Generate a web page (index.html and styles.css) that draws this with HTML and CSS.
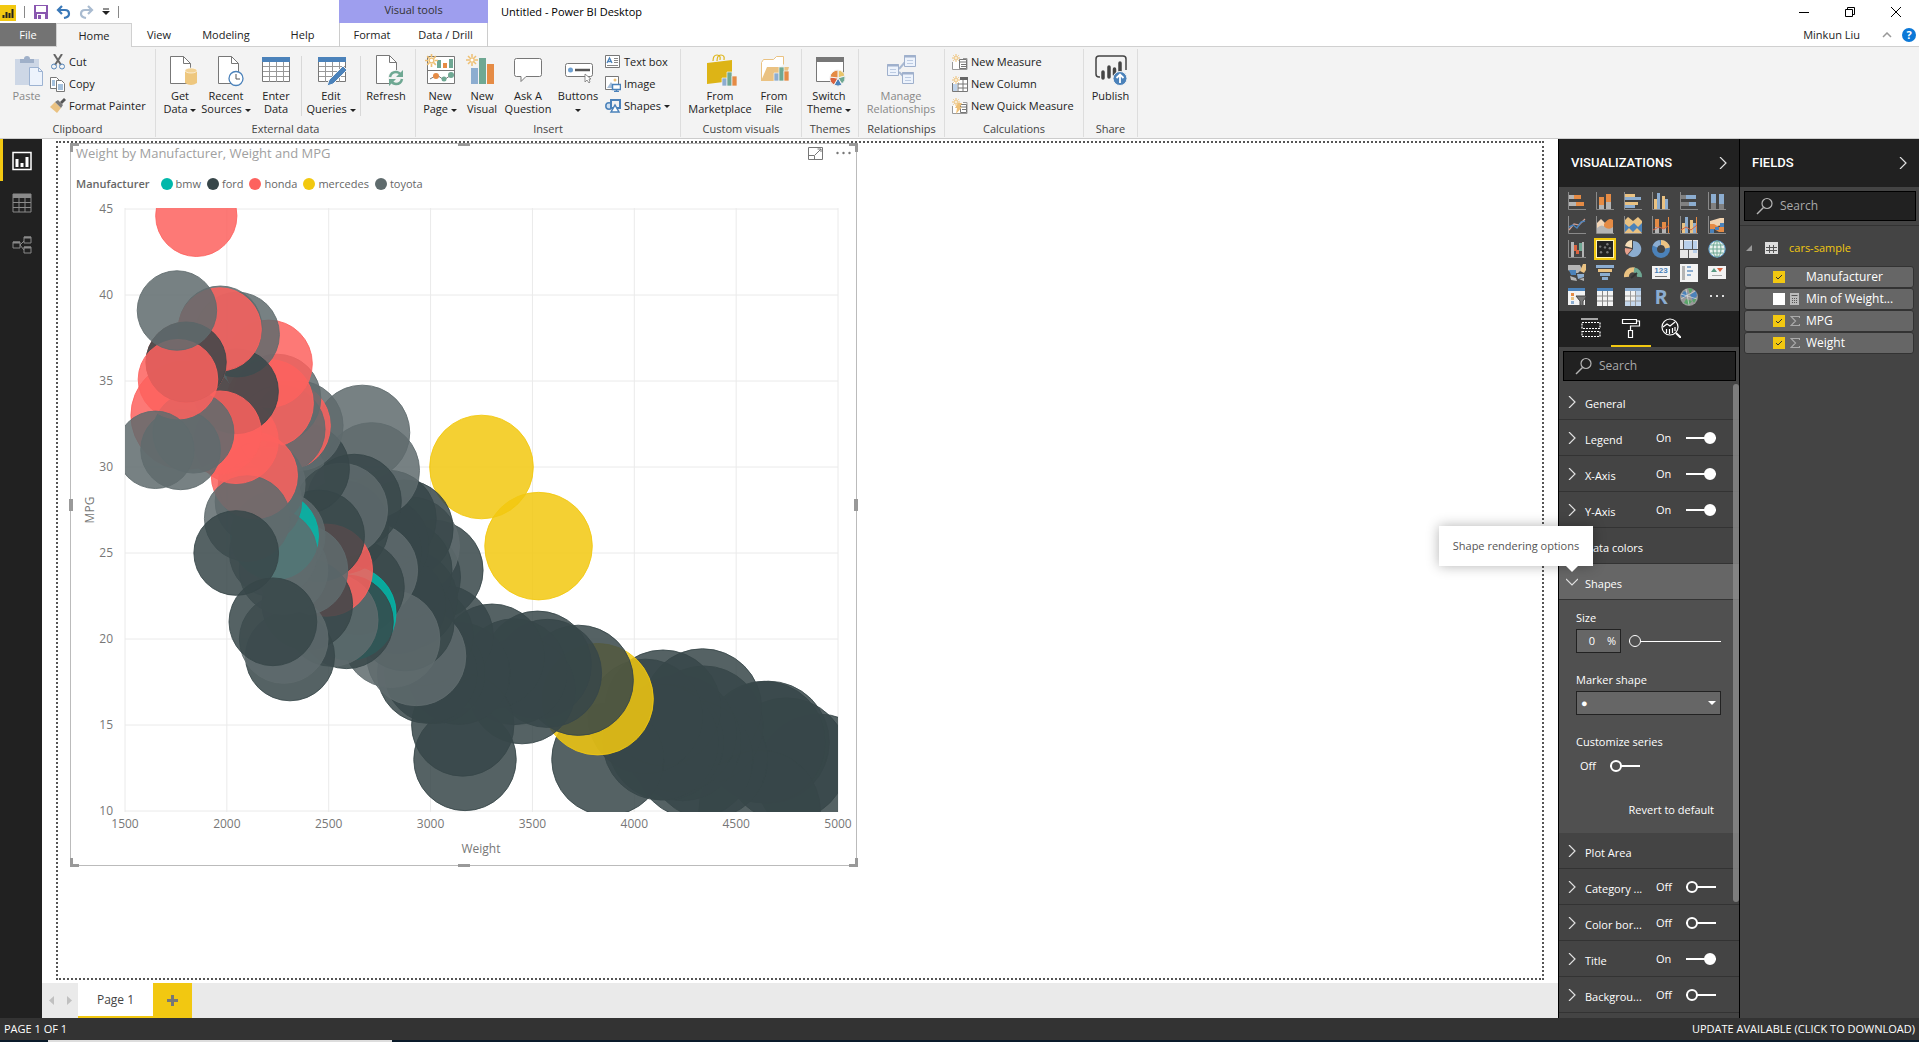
FILE: index.html
```html
<!DOCTYPE html>
<html lang="en">
<head>
<meta charset="utf-8">
<title>Untitled - Power BI Desktop</title>
<link rel="stylesheet" href="styles.css">
</head>
<body>
<svg class="defs" aria-hidden="true">
  <symbol id="sun" viewBox="0 0 12 12"><path d="M6 0v3M6 9v3M0 6h3M9 6h3M2 2l2 2M8 8l2 2M10 2L8 4M4 8l-2 2" stroke="#eec074" stroke-width="1.5"/><circle cx="6" cy="6" r="2.2" fill="#fff" stroke="#eec074" stroke-width="1.3"/></symbol>
  <symbol id="chev" viewBox="0 0 12 12"><path d="M3 0l6 6-6 6" fill="none" stroke="#e0e0e0" stroke-width="1.2"/></symbol>
  <symbol id="search" viewBox="0 0 18 18"><circle cx="11" cy="6.500" r="5" fill="none" stroke="#b5b5b5" stroke-width="1.2"/><path d="M7.500 10.500L1 17" stroke="#b5b5b5" stroke-width="1.4"/></symbol>
  <symbol id="sigma" viewBox="0 0 10 12"><path d="M9.500 3V1.500H1L5.500 6 1 10.500h8.500V9" fill="none" stroke="#aaa" stroke-width="1.2"/></symbol>
</svg>

<header class="titlebar">
  <div class="quick">
    <svg width="16" height="20" viewBox="0 0 16 20"><path fill="#f2c811" d="M0 3h16v16H0z"/><path stroke="#222" stroke-width="2" d="M3.500 16v-3M6.500 16v-6M9.500 16v-5M12.500 16V7"/></svg>
    <i class="bar"></i>
    <button class="qa" aria-label="Save"><svg width="14" height="14" viewBox="0 0 14 14"><path d="M0 0h14v14H0z" fill="#8a57b0"/><path fill="#fff" d="M2 1h10v6H2zM3 9h8v5H3z"/><path fill="#8a57b0" d="M4 10h3v4H4z"/></svg></button>
    <button class="qa" aria-label="Undo"><svg width="15" height="14" viewBox="0 0 15 14"><path d="M6 1L2 5l4 4M2 5h7q4 0 4 4 0 3-5 4" fill="none" stroke="#3a78b8" stroke-width="2.200"/></svg></button>
    <button class="qa" aria-label="Redo"><svg width="15" height="14" viewBox="0 0 15 14"><path d="M9 1l4 4-4 4M13 5H6Q2 5 2 9q0 3 5 4" fill="none" stroke="#a9bbd0" stroke-width="2.200"/></svg></button>
    <button class="qa" aria-label="Customize toolbar"><svg width="8" height="8" viewBox="0 0 8 8"><path d="M1 1h6" stroke="#222"/><path d="M0 3h8L4 7z" fill="#222"/></svg></button>
    <i class="bar"></i>
  </div>
  <div class="context-title">Visual tools</div>
  <h1 class="window-title">Untitled - Power BI Desktop</h1>
  <div class="window-buttons">
    <button aria-label="Minimize"><svg width="12" height="12"><path d="M1 6.500h10" stroke="#000"/></svg></button>
    <button aria-label="Restore"><svg width="12" height="12" fill="none" stroke="#000"><path d="M1.500 3.500h7v7h-7zM3.500 3V1.500h7v7H9"/></svg></button>
    <button aria-label="Close"><svg width="12" height="12" stroke="#000"><path d="M1 1l10 10M11 1L1 11"/></svg></button>
  </div>
</header>

<nav class="tabs">
  <button class="tab file">File</button>
  <button class="tab active">Home</button>
  <button class="tab">View</button>
  <button class="tab">Modeling</button>
  <button class="tab">Help</button>
  <div class="context-tabs"><button class="tab">Format</button><button class="tab">Data / Drill</button></div>
  <div class="account"><span>Minkun Liu</span>
    <svg width="10" height="6" fill="none" stroke="#999" stroke-width="1.500"><path d="M1 5l4-4 4 4"/></svg>
    <button class="help" aria-label="Help">?</button></div>
</nav>

<section class="ribbon" aria-label="Ribbon">
  <div class="group">
    <div class="tools">
      <button class="big w-paste off"><svg width="34" height="32" viewBox="0 0 34 32"><path fill="#cdd7e6" d="M5 5h24v26H5z"/><path fill="#9fb0c9" d="M10 5h4q0-3 3-3t3 3h4v4H10z"/><path d="M19.500 13.500h9l4 4v14h-13z" fill="#edf3fc" stroke="#9db3d2"/><path d="M28.500 13.500v4h4" fill="none" stroke="#9db3d2"/></svg><span>Paste</span></button>
      <div class="stack">
        <button class="row"><svg width="16" height="16" viewBox="0 0 16 16"><path d="M4 0l7 11M12 0L5 11" stroke="#666" stroke-width="2"/><circle cx="4" cy="12.500" r="2.500" fill="none" stroke="#5687bb"/><circle cx="12" cy="12.500" r="2.500" fill="none" stroke="#5687bb"/></svg>Cut</button>
        <button class="row"><svg width="16" height="16" viewBox="0 0 16 16" fill="#fff" stroke="#777"><path d="M.5 1.500h6l3 3v8h-9z"/><path d="M6.500 4.500h5l3 3v8h-8z"/><path stroke="#4b82ba" d="M2 5h3M2 7h3M2 9h3M8 9h5M8 11h5M8 13h5"/></svg>Copy</button>
        <button class="row"><svg width="16" height="16" viewBox="0 0 16 16"><path d="M0 9l5-5 6 6-4 5z" fill="#eac282"/><path d="M5 4l3-2 5 5-2 3z" fill="#7a7a7a"/><path d="M10 4l4-4 2 2-4 4z" fill="#555"/></svg>Format Painter</button>
      </div>
    </div>
    <div class="group-name">Clipboard</div>
  </div>
  <div class="group">
    <div class="tools">
      <button class="big w42"><svg width="34" height="32" viewBox="0 0 34 32"><path d="M7.500 2.500h13l7 7v20h-20z" fill="#fff" stroke="#777"/><path d="M20.500 2.500v7h7" fill="none" stroke="#777"/><path d="M22 17v12q6 4 12 0V17z" fill="#eec77e"/><ellipse cx="28" cy="16.500" rx="6" ry="2.500" fill="#f2d294" stroke="#fff" stroke-width=".6"/></svg><span>Get<br>Data <i class="dd"></i></span></button>
      <button class="big w50"><svg width="34" height="32" viewBox="0 0 34 32"><path d="M9.500 2.500h13l7 7v20h-20z" fill="#fff" stroke="#777"/><path d="M22.500 2.500v7h7" fill="none" stroke="#777"/><circle cx="27" cy="24.500" r="7" fill="#fff" stroke="#4b82ba" stroke-width="1.300"/><path d="M27 20v5h4" fill="none" stroke="#555"/></svg><span>Recent<br>Sources <i class="dd"></i></span></button>
      <button class="big w50"><svg width="34" height="32" viewBox="0 0 34 32"><path d="M3.500 3.500h27v24h-27z" fill="#fff" stroke="#777"/><path fill="#4b82ba" d="M3 3h28v5H3z"/><path d="M4 12.500h26M4 17.500h26M4 22.500h26M10.500 8v20M17.500 8v20M24.500 8v20" stroke="#999"/></svg><span>Enter<br>Data</span></button>
      <i class="sep"></i>
      <button class="big w58"><svg width="34" height="32" viewBox="0 0 34 32"><path d="M4.500 3.500h27v24h-27z" fill="#fff" stroke="#777"/><path fill="#4b82ba" d="M4 3h28v5H4z"/><path d="M5 12.500h26M5 17.500h26M5 22.500h26M11.500 8v20M18.500 8v20M25.500 8v20" stroke="#999"/><path d="M13 32l2-6 14-14 4 4-14 14z" fill="#4b82ba" stroke="#f3f3f3"/></svg><span>Edit<br>Queries <i class="dd"></i></span></button>
      <i class="sep"></i>
      <button class="big w50"><svg width="34" height="32" viewBox="0 0 34 32"><path d="M7.500 1.500h13l7 7v21h-20z" fill="#fff" stroke="#777"/><path d="M20.500 1.500v7h7" fill="none" stroke="#777"/><circle cx="27" cy="24" r="8" fill="#f3f3f3"/><path d="M21 23q1-5 6-5 3 0 5 3M33 25q-1 5-6 5-3 0-5-3" fill="none" stroke="#6fa893" stroke-width="2.500"/><path d="M34 16v7h-7zM20 32v-7h7z" fill="#6fa893"/></svg><span>Refresh</span></button>
    </div>
    <div class="group-name">External data</div>
  </div>
  <div class="group">
    <div class="tools">
      <button class="big w42"><svg width="34" height="32" viewBox="0 0 34 32"><path d="M4.500 2.500h27v27h-27zM4 16.500h28" fill="#fff" stroke="#777"/><path fill="#6fa893" d="M14 6h4v8h-4zM26 5h4v9h-4z"/><path fill="#e58b45" d="M20 9h4v5h-4z"/><path d="M7 25l7-4 7 5 7-5" stroke="#777" fill="none"/><circle cx="13" cy="22" r="3" fill="#e58b45"/><circle cx="21" cy="25" r="2.500" fill="#6fa893"/><circle cx="28" cy="21" r="3" fill="#6fa893"/><use href="#sun" x="2" y="0" width="13" height="13"/></svg><span>New<br>Page <i class="dd"></i></span></button>
      <button class="big w42"><svg width="34" height="32" viewBox="0 0 34 32"><path fill="#8cadd0" d="M6 14h7v16H6z"/><path fill="#6fa893" d="M14 4h7v26h-7z"/><path fill="#e58b45" d="M22 10h7v20h-7z"/><use href="#sun" x="1" y="0" width="12" height="12"/></svg><span>New<br>Visual</span></button>
      <button class="big w50"><svg width="34" height="32" viewBox="0 0 34 32"><path d="M5.500 4.500h23q2 0 2 2v14q0 2-2 2H15l-5 5v-5H5.500q-2 0-2-2v-14q0-2 2-2z" fill="#fff" stroke="#777"/></svg><span>Ask A<br>Question</span></button>
      <button class="big w50"><svg width="34" height="32" viewBox="0 0 34 32"><rect x="4.500" y="9.500" width="27" height="13" rx="2" fill="#fff" stroke="#777"/><circle cx="9.500" cy="16" r="2.500" fill="#6d9fd0"/><path d="M14 16h15" stroke="#555" stroke-width="2.500"/><path d="M24 20v8l2-2 2 3 1-1-1-3h2z" fill="#fff" stroke="#777" stroke-width=".8"/></svg><span>Buttons<br><i class="dd"></i></span></button>
      <div class="stack insert">
        <button class="row"><svg width="16" height="14" viewBox="0 0 16 14"><path d="M.5.500h14v12H.5z" fill="#fff" stroke="#777"/><path d="M2 8l2.500-5L7 8M3 6.500h3" stroke="#4b82ba" fill="none" stroke-width="1.300"/><path d="M9 3.500h4M9 5.500h4M9 7.500h4M2 10.500h11" stroke="#888"/></svg>Text box</button>
        <button class="row"><svg width="16" height="16" viewBox="0 0 16 16"><path d="M.5.500h13v13H.5z" fill="#fff" stroke="#777"/><path d="M2 12l4-6 4 6z" fill="#a9c0da"/><circle cx="10" cy="4" r="1.500" fill="#eec077"/><path d="M7.500 8.500h8v5h-8zM11.500 13v3M9 15.500h5" fill="#fff" stroke="#4b82ba" stroke-width="1.500"/></svg>Image</button>
        <button class="row"><svg width="16" height="14" viewBox="0 0 16 14"><circle cx="4" cy="7" r="3.200" fill="#cfdff0" stroke="#4b82ba" stroke-width="1.500"/><path d="M6 1h9v8H6z" fill="#f3f3f3" stroke="#4b82ba" stroke-width="2"/><path d="M6 13l4-7 4 7z" fill="#fff" stroke="#4b82ba" stroke-width="1.500"/></svg>Shapes <i class="dd"></i></button>
      </div>
    </div>
    <div class="group-name">Insert</div>
  </div>
  <div class="group">
    <div class="tools">
      <button class="big w72"><svg width="34" height="32" viewBox="0 0 34 32"><path d="M4 9l25-3v21L4 30z" fill="#ddb416"/><path d="M10 7q0-6 4-6t3 5M14 7q0-6 4-6t3 5" fill="none" stroke="#ddb416" stroke-width="1.200"/><path fill="#8cadd0" stroke="#f3f3f3" stroke-width=".7" d="M19 24h5v8h-5z"/><path fill="#6fa893" stroke="#f3f3f3" stroke-width=".7" d="M24 18h5v14h-5z"/><path fill="#e58b45" stroke="#f3f3f3" stroke-width=".7" d="M29 22h5v10h-5z"/></svg><span>From<br>Marketplace</span></button>
      <button class="big w36"><svg width="34" height="32" viewBox="0 0 34 32"><path d="M4.500 27V8.500l2-3h10l3-3h7v8" fill="#fff" stroke="#eac282"/><path d="M4 27l6-14h22l-4 14z" fill="#eac282"/><path fill="#8cadd0" stroke="#f3f3f3" stroke-width=".7" d="M17 19h5v8h-5z"/><path fill="#6fa893" stroke="#f3f3f3" stroke-width=".7" d="M22 13h5v14h-5z"/><path fill="#e58b45" stroke="#f3f3f3" stroke-width=".7" d="M27 17h5v10h-5z"/></svg><span>From<br>File</span></button>
    </div>
    <div class="group-name">Custom visuals</div>
  </div>
  <div class="group">
    <div class="tools">
      <button class="big w48"><svg width="34" height="32" viewBox="0 0 34 32"><path d="M4.500 3.500h27v24h-27z" fill="#fff" stroke="#777"/><path fill="#777" d="M4 3h28v5H4z"/><g stroke="#f3f3f3"><path fill="#e9c46a" d="M26 24V16a8 8 0 0 1 7 6z"/><path fill="#6fa893" d="M26 24l7-2a8 8 0 0 1-3 8z"/><path fill="#4b82ba" d="M26 24l4 7a8 8 0 0 1-8 0z"/><path fill="#d9623f" d="M26 24l-4 7a8 8 0 0 1-4-8z"/><path fill="#e58b45" d="M26 24l-8-1a8 8 0 0 1 8-7z"/></g></svg><span>Switch<br>Theme <i class="dd"></i></span></button>
    </div>
    <div class="group-name">Themes</div>
  </div>
  <div class="group">
    <div class="tools">
      <button class="big w78 off"><svg width="34" height="32" viewBox="0 0 34 32"><path d="M15 15l7-8M15 18l6 6" stroke="#a9b9d2" stroke-width="2"/><g fill="#edf3fc" stroke="#9fb0cc"><path d="M3.500 10.500h11v11h-11zM20.500 1.500h11v11h-11zM18.500 18.500h11v11h-11z"/></g><path d="M3 11.500h12M20 2.500h12M18 19.500h12" stroke="#9fb0cc" stroke-width="2"/><path d="M6 15.500h6M6 18.500h6M23 6.500h6M23 9.500h6M21 23.500h6M21 26.500h6" stroke="#bccbe2"/></svg><span>Manage<br>Relationships</span></button>
    </div>
    <div class="group-name">Relationships</div>
  </div>
  <div class="group">
    <div class="tools calc">
      <div class="stack">
        <button class="row"><svg width="16" height="16" viewBox="0 0 16 16"><path d="M.5 8v7.500H15V4.500h-4" fill="#fff" stroke="#999"/><path fill="#fff" stroke="#777" d="M7.500 5.500h7v9h-7z"/><path d="M8 8h6M9 10.500h5M9 12.500h5" stroke="#777"/><use href="#sun" width="8" height="8"/></svg>New Measure</button>
        <button class="row"><svg width="16" height="16" viewBox="0 0 16 16"><path d="M.5 7v8.500h15v-13H8" fill="#fff" stroke="#777"/><path fill="#666" d="M8 1h8v3H8z"/><path d="M6 8h9M6 12h9M11 4v11M6 7v8" stroke="#777"/><path fill="#bfd3ea" d="M1 8h4v7H1z"/><use href="#sun" width="8" height="8"/></svg>New Column</button>
        <button class="row"><svg width="16" height="16" viewBox="0 0 16 16"><path d="M.5 8v7.500H15V4.500h-4" fill="#fff" stroke="#999"/><path fill="#fff" stroke="#777" d="M8.500 6.500h6v8h-6z"/><path d="M9 9h5M10 11.500h4" stroke="#777"/><path d="M6 5h4l-2 4h2l-6 7 1-6H3z" fill="#eec077"/><use href="#sun" width="8" height="8"/></svg>New Quick Measure</button>
      </div>
    </div>
    <div class="group-name">Calculations</div>
  </div>
  <div class="group">
    <div class="tools">
      <button class="big w48"><svg width="34" height="32" viewBox="0 0 34 32"><path d="M6 23H5q-3 0-3-3V5q0-3 3-3h24q3 0 3 3v11" fill="none" stroke="#444" stroke-width="1.500"/><path d="M9 18v6M15 13v10M20.500 15v6M26 9v8" stroke="#444" stroke-width="3.500" stroke-linecap="round"/><circle cx="26" cy="24.500" r="7" fill="#4b82ba" stroke="#f3f3f3"/><path d="M26 29v-8M22.500 24l3.500-3.500 3.500 3.500" fill="none" stroke="#fff" stroke-width="1.800"/></svg><span>Publish</span></button>
    </div>
    <div class="group-name">Share</div>
  </div>
</section>

<main class="workspace">
  <nav class="views">
    <button class="view active" aria-label="Report view"><svg width="20" height="20" viewBox="0 0 20 20"><path d="M1 1.500h18v17H1z" fill="none" stroke="#fff" stroke-width="1.500"/><path d="M5 16V8M10 16v-4M15 16V6" stroke="#fff" stroke-width="3"/></svg></button>
    <button class="view" aria-label="Data view"><svg width="20" height="20" viewBox="0 0 20 20"><path d="M1 1h18v18H1zM1 9.500h18M1 14.500h18M7 5v14M13 5v14" fill="none" stroke="#8a8a8a"/><path fill="#8a8a8a" d="M1 1h18v4H1z"/></svg></button>
    <button class="view" aria-label="Model view"><svg width="20" height="20" viewBox="0 0 20 20" fill="none" stroke="#8a8a8a"><path d="M1 7h7v6H1zM12 2h7v6h-7zM12 12h7v6h-7zM8 10l4-4M8 10l4 5"/><path stroke-width="2" d="M1 7.500h7M12 2.500h7M12 12.500h7"/></svg></button>
  </nav>

  <section class="report">
    <div class="canvas">
      <div class="page">
        <article class="visual">
          <i class="handle tl"></i><i class="handle tm"></i><i class="handle tr"></i><i class="handle ml"></i><i class="handle mr"></i><i class="handle bl"></i><i class="handle bm"></i><i class="handle br"></i>
          <header class="visual-head">
            <h2>Weight by Manufacturer, Weight and MPG</h2>
            <button aria-label="Focus mode"><svg width="15" height="13" viewBox="0 0 15 13" fill="none" stroke="#777"><path d="M.5.500h14v12H.5zM.5 8.500h6v4M7 8l6-6M9.500 2h3.500v3"/></svg></button>
            <button aria-label="More options"><svg width="15" height="4" viewBox="0 0 15 4" fill="#777"><circle cx="1.500" cy="2" r="1.200"/><circle cx="7.500" cy="2" r="1.200"/><circle cx="13.500" cy="2" r="1.200"/></svg></button>
          </header>
          <ul class="legend">
            <li class="legend-title">Manufacturer</li>
            <li class="bmw">bmw</li><li class="ford">ford</li><li class="honda">honda</li><li class="mercedes">mercedes</li><li class="toyota">toyota</li>
          </ul>
          <svg class="plot" viewBox="0 0 785 664" role="img" aria-label="Bubble chart of weight against MPG">
            <clipPath id="plot-clip"><rect x="54" y="8" width="713" height="604"/></clipPath>
            <g id="grid"></g>
            <g id="bubbles" clip-path="url(#plot-clip)"></g>
            <g id="axis"></g>
            <text x="410" y="653" text-anchor="middle">Weight</text>
            <text transform="translate(23 310) rotate(-90)" text-anchor="middle">MPG</text>
          </svg>
        </article>
      </div>
    </div>
    <footer class="pages">
      <button class="pager" aria-label="Previous page"><svg width="5" height="9"><path d="M5 0v9L0 4.500z" fill="#c0c0c0"/></svg></button>
      <button class="pager" aria-label="Next page"><svg width="5" height="9"><path d="M0 0v9l5-4.500z" fill="#c0c0c0"/></svg></button>
      <button class="page-tab">Page 1</button>
      <button class="page-add" aria-label="New page"><svg width="11" height="11"><path d="M5.500 0v11M0 5.500h11" stroke="#777" stroke-width="3"/></svg></button>
    </footer>
  </section>

  <aside class="pane">
    <header class="pane-head"><h2>VISUALIZATIONS</h2><svg width="12" height="12"><use href="#chev" width="12" height="12"/></svg></header>
    <div class="gallery">
      <button aria-label="Stacked bar"><svg viewBox="0 0 20 20"><path class="ax" d="M1.500 1v17.500H19"/><path class="g" d="M2 4h5v4H2zM2 11h7v4H2z"/><path class="o" d="M7 4h7v4H7zM9 11h8v4H9z"/></svg></button>
      <button aria-label="Stacked column"><svg viewBox="0 0 20 20"><path class="ax" d="M1.500 1v17.500H19"/><path class="o" d="M4 6h5v8H4zM11 3h5v8h-5z"/><path class="g" d="M4 14h5v4H4zM11 11h5v7h-5z"/></svg></button>
      <button aria-label="Clustered bar"><svg viewBox="0 0 20 20"><path class="ax" d="M1.500 1v17.500H19"/><path class="y" d="M2 3h10v3H2zM2 11h13v3H2z"/><path class="b" d="M2 6h16v3H2zM2 14h10v3H2z"/></svg></button>
      <button aria-label="Clustered column"><svg viewBox="0 0 20 20"><path class="ax" d="M1.500 1v17.500H19"/><path class="y" d="M3 8h3v10H3zM11 5h3v13h-3z"/><path class="b" d="M6 2h3v16H6zM14 8h3v10h-3z"/></svg></button>
      <button aria-label="100% stacked bar"><svg viewBox="0 0 20 20"><path class="ax" d="M1.500 1v17.500H19"/><path class="k" d="M2 4h5v4H2zM2 11h8v4H2z"/><path class="b" d="M7 4h10v4H7zM10 11h7v4h-7z"/></svg></button>
      <button aria-label="100% stacked column"><svg viewBox="0 0 20 20"><path class="ax" d="M1.500 1v17.500H19"/><path class="b" d="M4 3h5v9H4zM12 3h5v10h-5z"/><path class="k" d="M4 12h5v6H4zM12 13h5v5h-5z"/></svg></button>

      <button aria-label="Line"><svg viewBox="0 0 20 20"><path class="ax" d="M1.500 1v17.500H19"/><path d="M2 15l5-6 5 1 6-6" fill="none" stroke="#d7a294" stroke-width="1.200"/><path d="M2 12l4-2 4 3 4-6 4-1" fill="none" stroke="#4b82ba" stroke-width="1.400"/></svg></button>
      <button aria-label="Area"><svg viewBox="0 0 20 20"><path class="ax" d="M1.500 1v17.500H19"/><path fill="#f3d5b5" d="M2 8l4-4 6 6v8H2z"/><path class="o" d="M9 9q5-7 9-4v9H9z"/><path class="g" d="M2 13q5-5 9 0 4 2 7-1v6H2z"/></svg></button>
      <button aria-label="Stacked area"><svg viewBox="0 0 20 20"><path class="y" d="M1 6l4-4 5 4 5-4 4 4v7H1z"/><path fill="#4b82ba" d="M1 8l5 4 5-4 4 4 4-4v9H1z"/><path class="y" d="M1 18l5-5 4 4 4-4 5 5z"/><path class="ax" d="M1.500 1v17.500H19"/></svg></button>
      <button aria-label="Line and stacked column"><svg viewBox="0 0 20 20"><path class="ax" d="M1.500 1v17.500H19"/><path class="o" d="M4 4h4v8H4zM11 7h4v6h-4zM17 2h1v16h-1z"/><path class="g" d="M4 12h4v6H4zM11 13h4v5h-4z"/><path d="M2 15l6-3 5 2 5-4" fill="none" stroke="#d9623f"/></svg></button>
      <button aria-label="Line and clustered column"><svg viewBox="0 0 20 20"><path class="ax" d="M1.500 1v17.500H19"/><path class="y" d="M3 8h3v10H3zM11 5h3v13h-3z"/><path class="b" d="M6 2h3v16H6zM14 8h3v10h-3z"/><path class="o" d="M17 2h1v16h-1z"/><path d="M2 15l5-3 5 3 6-5" fill="none" stroke="#d9623f"/></svg></button>
      <button aria-label="Ribbon"><svg viewBox="0 0 20 20"><path class="ax" d="M1.500 1v17.500H19"/><path fill="#f1d3b0" d="M3 6l10-3h4v7L3 12z"/><path class="o" d="M3 9h4l5 3h5v5h-5l-5-3H3z"/><path fill="#4b82ba" d="M3 14h4v4H3zM13 8h4v4h-4zM8 12h4v3H8z"/></svg></button>

      <button aria-label="Waterfall"><svg viewBox="0 0 20 20"><path class="ax" d="M1.500 1v17.500H19"/><path class="g" d="M4 3h3v15H4zM15 3h2v15h-2z"/><path fill="#d9623f" d="M7 6h3v6H7zM9 11h3v4H9z"/><path fill="#6fa893" d="M12 4h3v8h-3z"/></svg></button>
      <button class="chosen" aria-label="Scatter chart"><svg viewBox="0 0 20 20"><g fill="#777"><circle cx="4" cy="7" r="1.500"/><circle cx="10" cy="8" r="1.500"/><circle cx="13" cy="4" r="1.500"/><circle cx="16" cy="9" r="1.500"/><circle cx="5" cy="14" r="1.500"/><circle cx="13" cy="14" r="1.500"/></g></svg></button>
      <button aria-label="Pie"><svg viewBox="0 0 20 20"><path fill="#8cadd0" d="M10 10V2a8 8 0 1 1-5 14z"/><path fill="#e8a08c" d="M9 10l-5 6a8 8 0 0 1-2-7z"/><path fill="#f5deb8" d="M9 9L2 7a8 8 0 0 1 7-6z"/></svg></button>
      <button aria-label="Donut"><svg viewBox="0 0 20 20" fill="none" stroke-width="5"><circle cx="10" cy="10" r="6.500" stroke="#4b82ba"/><path d="M10 3.500A6.500 6.500 0 0 1 16.500 9" stroke="#eac282"/><path d="M4 7.500A6.500 6.500 0 0 1 9 3.500" stroke="#8cadd0"/></svg></button>
      <button aria-label="Treemap"><svg viewBox="0 0 20 20"><path fill="#e8e8e8" d="M1 1h18v18H1z"/><path fill="#b9d0ea" d="M5 2h8v8H5zM14 2h4v12h-4z"/><path d="M1 10.500h18M4.500 1v10M13.500 1v10M9.500 11v8" stroke="#555"/></svg></button>
      <button aria-label="Map"><svg viewBox="0 0 20 20"><circle cx="10" cy="10" r="8.200" fill="#e9f2ee" stroke="#5e9fd0"/><path d="M10 2v16M2 10h16M3.500 6h13M3.500 14h13" stroke="#6fa893"/><ellipse cx="10" cy="10" rx="4" ry="8" fill="none" stroke="#6fa893"/></svg></button>

      <button aria-label="Filled map"><svg viewBox="0 0 20 20"><path class="g" d="M1 2h12l2 4-4 4H5L1 7z"/><path fill="#4b82ba" d="M2 7h7v5H4z"/><path class="y" d="M16 1h3v6l-2 3-4-2z"/><path class="b" d="M10 11h7v3l-6 2z"/><path class="g" d="M3 13l6 2 1 3-6-1zM12 16l5-1v3z"/></svg></button>
      <button aria-label="Funnel"><svg viewBox="0 0 20 20"><path class="b" d="M1 2h18v3H1zM5 10h10v3H5zM7 14h6v3H7z"/><path class="y" d="M3 6h14v3H3z"/></svg></button>
      <button aria-label="Gauge"><svg viewBox="0 0 20 20" fill="none" stroke-width="5"><path d="M3.500 14a6.500 6.500 0 0 1 8-7" stroke="#eac282"/><path d="M11 7a6.500 6.500 0 0 1 5.500 7" stroke="#6fa893"/><path d="M8 15l6-5" stroke="#333" stroke-width="2"/></svg></button>
      <button aria-label="Card"><svg viewBox="0 0 20 20"><path fill="#f3f3f3" d="M1 3h18v13H1z"/><text class="n123" x="10" y="10">123</text><path d="M4 13.500h12" stroke="#777"/></svg></button>
      <button aria-label="Multi-row card"><svg viewBox="0 0 20 20"><path fill="#f3f3f3" d="M1 1h18v18H1z"/><path class="g" d="M3 3h3v14H3z"/><path class="b" d="M8 3h4v2H8zM8 7h6v2H8zM8 11h4v2H8z"/></svg></button>
      <button aria-label="KPI"><svg viewBox="0 0 20 20"><path fill="#f3f3f3" d="M1 3h18v13H1z"/><path fill="#5a9b84" d="M4 9l3-4 3 4z"/><path fill="#d9623f" d="M10 5h6l-3 4z"/><path d="M5 12.500h10" stroke="#aaa"/></svg></button>

      <button aria-label="Slicer"><svg viewBox="0 0 20 20"><path fill="#f3f3f3" d="M1 1h17v17H1z"/><path fill="#4b82ba" d="M1 1h17v3H1z"/><path class="o" d="M4 6h3v3H4z"/><path class="y" d="M4 10h3v3H4z"/><path class="b" d="M4 14h3v3H4z"/><path fill="#777" stroke="#444" d="M9 9h11l-4 5v5l-3-1v-4z"/></svg></button>
      <button aria-label="Table"><svg viewBox="0 0 20 20"><path fill="#f3f3f3" d="M2 1h16v18H2z"/><path fill="#4b82ba" d="M2 1h16v3H2z"/><path d="M2 9h16M2 14h16M7.500 4v15M12.500 4v15" stroke="#888"/></svg></button>
      <button aria-label="Matrix"><svg viewBox="0 0 20 20"><path fill="#f3f3f3" d="M2 1h16v18H2z"/><path fill="#8cadd0" d="M2 1h16v3H2z"/><path fill="#c4d7ec" d="M12 4h6v15H2v-5h10z"/><path d="M2 9h16M2 14h16M7.500 4v15M12.500 4v15" stroke="#999"/></svg></button>
      <button aria-label="R script visual"><span class="r">R</span></button>
      <button aria-label="ArcGIS map"><svg viewBox="0 0 20 20"><circle cx="10" cy="10" r="9" fill="#999"/><path d="M5 4l4 2-3 5-4-2zM11 8l6-4 1 5-4 4z" fill="#4b82ba"/><path d="M9 1l5 1-3 5zM7 12l6 2-3 4-5-2zM13 13l5-2-3 5z" fill="#5aa469"/><path d="M2 7l16 5M2 12l14-8M7 2l3 16" stroke="#ddd" stroke-width=".7"/></svg></button>
      <button aria-label="More visuals"><svg viewBox="0 0 20 20" fill="#ddd"><path d="M3 8h2v2H3zM9 8h2v2H9zM15 8h2v2h-2z"/></svg></button>
    </div>
    <div class="pane-tabs">
      <button aria-label="Fields"><svg width="20" height="20" fill="none" stroke="#fff" stroke-width="1.200"><path d="M0 1h17"/><path stroke-dasharray="2 1" d="M1 4.500h18v6H1zM1 13.500h18v5H1z"/></svg></button>
      <button class="active" aria-label="Format"><svg width="20" height="20" fill="none" stroke="#fff" stroke-width="1.200"><path d="M1.500 1.500h14v4h-14zM15.500 3h3v5h-9v4M7.500 12.500h4v7h-4z"/></svg></button>
      <button aria-label="Analytics"><svg width="20" height="20" fill="none" stroke="#fff" stroke-width="1.200"><circle cx="9" cy="9" r="8"/><path d="M15 15l5 5" stroke-width="2"/><path d="M2 9l4-3 3 2 5-4M5.500 15v-4M8.500 16v-5M11.500 15v-5M14 13V9"/></svg></button>
    </div>
    <label class="searchbox"><svg width="18" height="18"><use href="#search"/></svg><input type="text" placeholder="Search" aria-label="Search formatting options"></label>
    <div class="cards">
      <i class="thumb"></i>
      <div class="card"><svg width="12" height="12"><use href="#chev"/></svg><span class="name">General</span></div>
      <label class="card"><svg width="12" height="12"><use href="#chev"/></svg><span class="name">Legend</span><span class="state">On</span><input class="switch" type="checkbox" checked></label>
      <label class="card"><svg width="12" height="12"><use href="#chev"/></svg><span class="name">X-Axis</span><span class="state">On</span><input class="switch" type="checkbox" checked></label>
      <label class="card"><svg width="12" height="12"><use href="#chev"/></svg><span class="name">Y-Axis</span><span class="state">On</span><input class="switch" type="checkbox" checked></label>
      <div class="card"><svg width="12" height="12"><use href="#chev"/></svg><span class="name">Data colors</span></div>
      <div class="card open"><svg width="12" height="12" viewBox="0 0 12 12" fill="none" stroke="#e0e0e0" stroke-width="1.200"><path d="M0 3l6 6 6-6"/></svg><span class="name">Shapes</span><div class="tooltip" role="tooltip">Shape rendering options</div></div>
      <div class="shape-options">
        <label for="size">Size</label>
        <div class="size-row">
          <span class="number"><input id="size" type="text" value="0"><span>%</span></span>
          <input class="slider" type="range" min="0" max="100" value="0" aria-label="Size">
        </div>
        <label for="marker">Marker shape</label>
        <select id="marker"><option>●</option><option>■</option></select>
        <label for="custom">Customize series</label>
        <div class="custom-row"><span>Off</span><input id="custom" class="switch" type="checkbox"></div>
        <button class="revert">Revert to default</button>
      </div>
      <div class="card"><svg width="12" height="12"><use href="#chev"/></svg><span class="name">Plot Area</span></div>
      <label class="card"><svg width="12" height="12"><use href="#chev"/></svg><span class="name">Category ...</span><span class="state">Off</span><input class="switch" type="checkbox"></label>
      <label class="card"><svg width="12" height="12"><use href="#chev"/></svg><span class="name">Color bor...</span><span class="state">Off</span><input class="switch" type="checkbox"></label>
      <label class="card"><svg width="12" height="12"><use href="#chev"/></svg><span class="name">Title</span><span class="state">On</span><input class="switch" type="checkbox" checked></label>
      <label class="card"><svg width="12" height="12"><use href="#chev"/></svg><span class="name">Backgrou...</span><span class="state">Off</span><input class="switch" type="checkbox"></label>
    </div>
  </aside>

  <aside class="pane">
    <header class="pane-head"><h2>FIELDS</h2><svg width="12" height="12"><use href="#chev" width="12" height="12"/></svg></header>
    <label class="searchbox"><svg width="18" height="18"><use href="#search"/></svg><input type="text" placeholder="Search" aria-label="Search fields"></label>
    <div class="fields">
      <div class="table-name"><svg width="6" height="6"><path d="M6 0v6H0z" fill="#999"/></svg><svg width="13" height="12" viewBox="0 0 13 12"><path fill="#ddd" d="M0 0h13v12H0z"/><path d="M1 5.500h11M1 8.500h11M4.500 3v8M8.500 3v8" stroke="#555"/></svg>cars-sample</div>
      <label class="field"><input type="checkbox" checked><i class="kind"></i>Manufacturer</label>
      <label class="field"><input type="checkbox"><svg class="kind" width="10" height="12" viewBox="0 0 10 12"><path fill="#bbb" d="M0 0h9v12H0z"/><path d="M1.500 2.500h6M2 5.500h1M4 5.500h1M6 5.500h1M2 7.500h1M4 7.500h1M6 7.500h1M2 9.500h1M4 9.500h1M6 9.500h1" stroke="#555"/></svg>Min of Weight...</label>
      <label class="field"><input type="checkbox" checked><svg class="kind" width="10" height="12"><use href="#sigma"/></svg>MPG</label>
      <label class="field"><input type="checkbox" checked><svg class="kind" width="10" height="12"><use href="#sigma"/></svg>Weight</label>
    </div>
  </aside>
</main>

<footer class="status"><span>PAGE 1 OF 1</span><a href="#">UPDATE AVAILABLE (CLICK TO DOWNLOAD)</a></footer>
<div class="taskbar"></div>
<script src="chart.js"></script>
</body>
</html>
```
FILE: styles.css
```css
*, *::before, *::after { box-sizing: border-box; }
body {
  margin: 0;
  min-height: 100vh;
  display: flex;
  flex-direction: column;
  font: 12px/16px "Open Sans", "Noto Sans", sans-serif;
  color: #222;
  background: #fff;
}
button, input, select { font: inherit; color: inherit; }
button { border: 0; padding: 0; background: none; }
h1, h2 { margin: 0; font-size: 12px; font-weight: 400; }
svg { display: block; flex: none; }
.defs { position: absolute; width: 0; height: 0; }

/* title bar */
.titlebar { height: 23px; display: grid; grid-template-columns: 339px 149px 1fr auto; }
.quick { display: flex; align-items: center; gap: 8px; }
.bar { width: 1px; height: 12px; margin: 0 1px 0 0; background: #888; }
.context-title { background: #9e9eee; text-align: center; line-height: 20px; font-size: 11px; color: #333; }
.window-title { padding-left: 13px; font-size: 11px; line-height: 23px; color: #000; }
.window-buttons { display: flex; align-items: center; }
.window-buttons button { width: 46px; height: 20px; display: grid; place-items: center; }

/* ribbon tabs */
.tabs { height: 24px; display: grid; grid-template-columns: 56px 76px 54px 80px 73px 149px 1fr; border-bottom: 1px solid #d0d0d0; font-size: 11px; }
.tab { height: 23px; }
.tab.file { background: #737373; color: #fff; }
.tab.active { background: #f3f3f3; border: 1px solid #d0d0d0; border-bottom: 0; height: 24px; z-index: 1; }
.context-tabs { display: grid; grid-template-columns: 64px 1fr; border: solid #ccc; border-width: 0 1px; }
.account { display: flex; justify-content: flex-end; align-items: center; padding-right: 3px; }
.account svg { margin: 0 10px 0 22px; }
.help { width: 14px; height: 14px; border-radius: 7px; background: #0b78d7; color: #fff; font-weight: 700; font-size: 11px; line-height: 14px; }

/* ribbon */
.ribbon { height: 92px; display: grid; grid-template-columns: 156px 260px 265px 121px 57px 86px 139px 54px; background: #f3f3f3; border-bottom: 1px solid #ccc; font-size: 11px; }
.group { margin: 2px 0 1px; border-right: 1px solid #ddd; display: flex; flex-direction: column; }
.tools { flex: 1; display: flex; padding: 2px 3px 0; justify-content: flex-start; }
.group-name { text-align: center; line-height: 16px; color: #444; }
.big { display: flex; flex-direction: column; align-items: center; line-height: 13px; padding-top: 3px; white-space: nowrap; }
.big span { margin-top: 3px; }
.big > svg { overflow: visible; }
.off { color: #888; }
.w-paste { width: 47px; }
.w36 { width: 36px; }
.w42 { width: 42px; }
.w48 { width: 48px; }
.w50 { width: 50px; }
.w58 { width: 58px; }
.w72 { width: 72px; }
.w78 { width: 78px; }
.sep { width: 1px; margin: 5px 0; background: #d8d8d8; }
.stack { display: flex; flex-direction: column; }
.insert { padding-left: 2px; }
.row { height: 22px; display: flex; align-items: center; gap: 3px; white-space: nowrap; }
.dd { display: inline-block; border: 3px solid transparent; border-top-color: #222; border-bottom: 0; vertical-align: middle; }
.calc { padding-left: 7px; }

/* workspace */
.workspace { flex: 1; display: grid; grid-template-columns: 42px 1fr 181px 180px; }
.views { background: #212121; }
.view { width: 100%; height: 42px; display: grid; place-items: center; padding: 2px 2px 0 0; border-left: 3px solid transparent; }
.view.active { border-left-color: #f2c811; }
.report { display: flex; flex-direction: column; min-width: 0; }
.canvas { flex: 1; display: flex; padding: 2px 14px 3px; background: #fff; }
.page { flex: 1; position: relative; border: 2px dotted #555; }
.pages { height: 35px; display: flex; background: #eaeaea; }
.pager { width: 18px; display: grid; place-items: center; }
.page-tab { width: 75px; background: #fff; border-bottom: 2px solid #f2c811; color: #444; }
.page-add { width: 39px; background: #f2c811; display: grid; place-items: center; }

/* selected visual */
.visual { position: absolute; left: 12px; top: 0; width: 787px; height: 723px; border: 1px solid #bbb; font-size: 12px; color: #666; }
.visual-head { display: flex; align-items: center; height: 18px; padding: 0 5px; gap: 13px; }
.visual-head h2 { flex: 1; font-size: 13px; color: #a0a0a0; }
.legend { list-style: none; display: flex; align-items: center; margin: 12px 0 0; padding: 0 5px; height: 20px; font-size: 11px; }
.legend li { display: flex; align-items: center; gap: 3px; margin-right: 6px; }
.legend li:not(.legend-title)::before { content: ""; width: 12px; height: 12px; border-radius: 6px; background: var(--dot); }
.legend .legend-title { font-weight: 600; margin-right: 11px; }
.bmw { --dot: #01b8aa; }
.ford { --dot: #374649; }
.honda { --dot: #fd625e; }
.mercedes { --dot: #f2c80f; }
.toyota { --dot: #5f6b6d; }
.plot { width: 785px; height: 664px; margin-top: 6px; }
.plot text { font-size: 12px; fill: #777; }
.plot circle { fill: var(--dot); fill-opacity: .85; stroke: var(--dot); stroke-opacity: .85; stroke-width: 1; }
.plot line { stroke: #eaeaea; stroke-width: 1; }
.handle { position: absolute; border: 0 solid #999; width: 9px; height: 9px; }
.tl { left: -1px; top: -1px; border-width: 3px 0 0 3px; }
.tr { right: -2px; top: -1px; border-width: 3px 3px 0 0; }
.bl { left: -1px; bottom: -2px; border-width: 0 0 3px 3px; }
.br { right: -2px; bottom: -2px; border-width: 0 3px 3px 0; }
.tm, .bm { left: 50%; margin-left: -6px; width: 12px; height: 3px; background: #999; }
.tm { top: -1px; }
.bm { bottom: -2px; }
.ml, .mr { top: 50%; margin-top: -6px; width: 4px; height: 12px; background: #999; }
.ml { left: -2px; }
.mr { right: -2px; }

/* right panes */
.pane { background: #444; color: #fff; border-left: 1px solid #000; display: flex; flex-direction: column; min-width: 0; }
.pane-head { height: 48px; background: #212121; display: flex; align-items: center; justify-content: space-between; padding: 0 10px 0 12px; }
.pane-head h2 { font: 500 13px/16px "Roboto", sans-serif; }
.gallery { display: grid; grid-template-columns: repeat(6, 28px); grid-auto-rows: 24px; padding: 2px 4px; }
.gallery button { display: grid; place-items: center; }
.gallery svg { width: 20px; height: 20px; }
.gallery .chosen { width: 22px; height: 22px; margin: 1px 3px; background: #222; border: 2px solid #f2c811; }
.gallery .chosen svg { width: 18px; height: 18px; border: 1px solid #fff3b0; }
.ax { fill: none; stroke: #8a8a8a; }
.g { fill: #b5b5b5; }
.k { fill: #808080; }
.o { fill: #e58b45; }
.y { fill: #eac282; }
.b { fill: #8cadd0; }
.n123 { font: 700 8px "Liberation Sans", sans-serif; fill: #4b82ba; text-anchor: middle; }
.r { font: 700 20px/20px "Open Sans", sans-serif; color: #8cadd0; }
.pane-tabs { height: 36px; background: #212121; display: flex; padding-left: 12px; }
.pane-tabs button { width: 40px; display: grid; place-items: center; border-bottom: 2px solid transparent; }
.pane-tabs .active { border-bottom-color: #f2c811; }
.searchbox { margin: 4px 3px 3px 4px; height: 30px; display: flex; align-items: center; gap: 6px; padding: 0 11px; background: #212121; border: 1px solid #000; }
.searchbox input { width: 100%; min-width: 0; border: 0; padding: 0; background: none; }
.searchbox input::placeholder { color: #aaa; opacity: 1; }
.cards { flex: 1; position: relative; }
.thumb { position: absolute; right: 0; top: 0; width: 6px; height: 518px; border-radius: 3px; background: #8c8c8c; opacity: .8; z-index: 1; }
.card { height: 36px; display: flex; align-items: center; padding: 1px 23px 0 7px; border-bottom: 1px solid #333; font-size: 11px; }
.name { margin-left: 7px; padding-top: 3px; flex: 1; white-space: nowrap; }
.state { width: 30px; }
.switch { appearance: none; width: 30px; height: 12px; margin: 0; flex: none; background: linear-gradient(#fff, #fff) 0 5px / 30px 2px no-repeat; position: relative; }
.switch::after { content: ""; position: absolute; left: 0; top: 0; width: 12px; height: 12px; border: 2px solid #fff; border-radius: 6px; background: #444; }
.switch:checked::after { left: auto; right: 0; background: #fff; }
.open { background: #666; position: relative; }
.tooltip { position: absolute; right: 146px; bottom: 33px; z-index: 2; width: 154px; height: 40px; text-align: center; line-height: 40px; white-space: nowrap; background: #fff; color: #555; box-shadow: 0 0 12px rgba(0, 0, 0, .3); }
.tooltip::after { content: ""; position: absolute; right: 15px; top: 40px; border: 6px solid transparent; border-top-color: #fff; border-bottom: 0; }
.shape-options { height: 233px; background: #505050; display: flex; flex-direction: column; padding: 10px 18px 0 17px; font-size: 11px; }
.size-row { display: flex; align-items: center; gap: 8px; margin: 3px 0 19px; }
.number { width: 45px; height: 24px; display: flex; align-items: center; padding-right: 3px; background: #666; border: 1px solid #222; }
.number input { width: 30px; border: 0; padding: 0; background: none; text-align: center; }
.slider { appearance: none; flex: 1; min-width: 0; height: 12px; margin: 0; background: linear-gradient(#fff, #fff) 0 6px / 100% 1px no-repeat; }
.slider::-webkit-slider-thumb { appearance: none; width: 12px; height: 12px; border: 1px solid #fff; border-radius: 6px; background: #505050; }
.shape-options select { height: 24px; margin: 3px 0 19px; appearance: none; border: 1px solid #222; border-radius: 0; padding: 0 4px; background: #666 url("data:image/svg+xml,%3Csvg xmlns='http://www.w3.org/2000/svg' width='8' height='4'%3E%3Cpath d='M0 0h8L4 4z' fill='white'/%3E%3C/svg%3E") no-repeat right 4px center; }
.custom-row { display: flex; align-items: center; gap: 14px; padding-left: 4px; margin: 8px 0 28px; }
.custom-row .switch::after { background: #505050; }
.revert { align-self: flex-end; margin-right: 7px; }

.fields { border-top: 1px solid #333; margin-top: 1px; padding: 10px 5px 0 4px; }
.table-name { display: flex; align-items: center; height: 24px; margin-bottom: 6px; color: #f2c811; font-size: 11px; padding-left: 2px; }
.table-name svg + svg { margin: 0 11px 0 13px; }
.field { height: 22px; display: flex; align-items: center; padding-left: 28px; background: #666; border: 1px solid #333; border-radius: 3px; font-size: 12px; }
.field input { appearance: none; width: 12px; height: 12px; margin: 0 5px 0 0; background: #fff; }
.field input:checked { background: #f2c811 url("data:image/svg+xml,%3Csvg xmlns='http://www.w3.org/2000/svg' width='12' height='12'%3E%3Cpath d='M3 6l2 2 4-4' fill='none' stroke='%23333'/%3E%3C/svg%3E"); }
.kind { width: 10px; margin-right: 6px; }

.status { height: 22px; display: flex; justify-content: space-between; align-items: center; padding: 0 4px; background: #333; color: #fff; font-size: 11px; }
.status a { color: inherit; text-decoration: none; }
.taskbar { height: 2px; background: linear-gradient(#ddd, #ddd) 48px 0 / 344px 2px no-repeat #0a1a2a; }
```
FILE: chart.js
```js
// Each entry: weight, miles per gallon, and how many cars share the point (1 if left out)
const cars = {
  bmw: [[2234, 26], [2600, 21.5]],
  mercedes: [[3820, 16.5], [3250, 30], [3530, 25.4]],
  honda: [[2489, 24], [1795, 33, 2], [2045, 31.5], [1800, 36.1], [2135, 29.5], [1850, 44.6], [2290, 32.4], [2210, 33.7], [1760, 35.1], [2205, 36], [1965, 38], [1965, 32]],
  toyota: [[2372, 24], [1773, 31], [2228, 25], [2278, 24], [2100, 27], [2279, 20], [2807, 20], [1836, 32], [1649, 31], [2171, 29], [2702, 24], [2155, 28], [2930, 19], [2265, 26], [2560, 27.5], [2515, 21.1], [1968, 38.1], [2711, 29.8], [2265, 32.2], [1755, 39.1], [2050, 37.7], [2350, 32.4], [2900, 25.4], [2665, 32], [2245, 34]],
  ford: [[3449, 17], [4341, 15], [2587, 21], [4615, 10], [3302, 19], [4154, 14], [4746, 13], [2046, 25], [3139, 18], [4129, 14], [2226, 21], [4294, 13], [2395, 22], [4237, 14], [3021, 18], [4906, 12], [4363, 13], [2310, 19], [2875, 21], [2451, 26], [4141, 16], [4638, 14], [3158, 15], [3169, 13], [4657, 14], [2639, 23], [2984, 18], [4215, 14.5], [3012, 24], [2565, 26.5], [3574, 18], [3870, 13], [4335, 16], [2755, 25.5], [3525, 18.5], [1800, 36.1], [2965, 20.2], [2720, 25.1], [3410, 18.1], [2890, 22.3], [3725, 17.6], [4054, 15.5], [2870, 26.4], [2905, 23.6], [2045, 34.4], [2380, 29.9], [3060, 20.2], [2865, 24], [2835, 22], [2790, 27], [2625, 28]]
};

const ns = 'http://www.w3.org/2000/svg';
const x = w => 54 + (w - 1500) * 713 / 3500;
const y = m => 9 + (45 - m) * 17.2;
const add = (id, tag, attrs, text) => {
  const el = document.createElementNS(ns, tag);
  for (const k in attrs) el.setAttribute(k, attrs[k]);
  if (text !== undefined) el.textContent = text;
  document.getElementById(id).append(el);
};

for (let m = 10; m <= 45; m += 5) {
  add('grid', 'line', { x1: 54, x2: 767, y1: y(m), y2: y(m) });
  add('axis', 'text', { x: 42, y: y(m) + 4, 'text-anchor': 'end' }, m);
}
for (let w = 1500; w <= 5000; w += 500) {
  add('grid', 'line', { x1: x(w), x2: x(w), y1: 8, y2: 612 });
  add('axis', 'text', { x: x(w), y: 628, 'text-anchor': 'middle' }, w);
}

// Bubble area follows the summed weight; larger bubbles are drawn first
Object.entries(cars)
  .flatMap(([make, list]) => list.map(([w, m, n = 1]) => ({ make, w, m, total: w * n })))
  .sort((a, b) => b.total - a.total)
  .forEach(c => add('bubbles', 'circle', {
    class: c.make, cx: x(c.w), cy: y(c.m), r: Math.sqrt(280 + 0.74 * c.total)
  }));
```
